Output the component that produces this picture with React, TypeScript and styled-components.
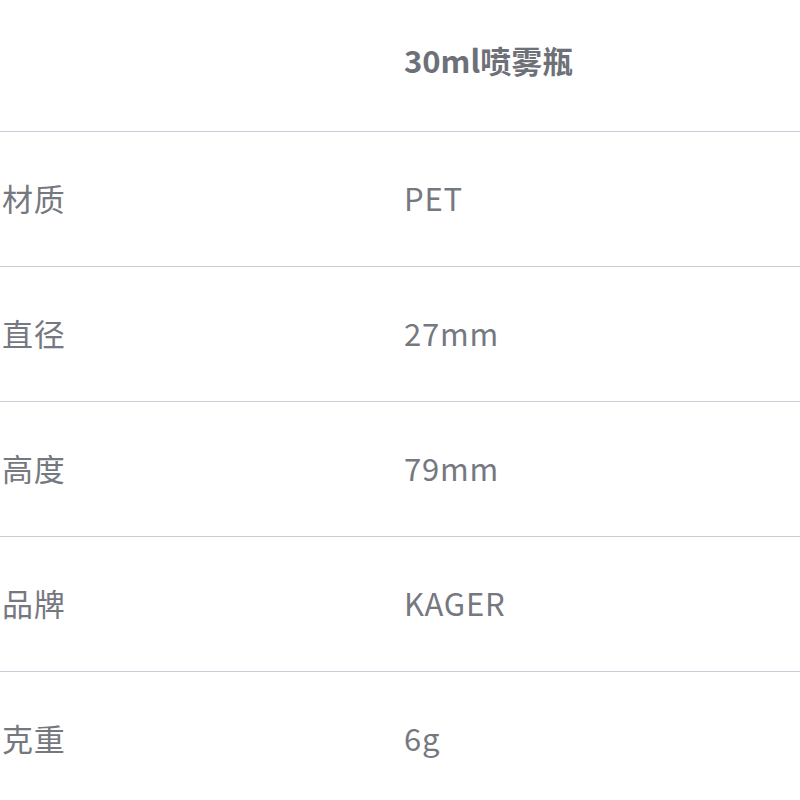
import React from "react";
import styled, { createGlobalStyle } from "styled-components";

const Global = createGlobalStyle`
  html, body { margin: 0; padding: 0; background: #ffffff; }
  body { font-family: "Noto Sans CJK SC", "Noto Sans", sans-serif; }
`;

const Table = styled.div`
  width: 800px;
  display: flex;
  flex-direction: column;
`;

const Row = styled.div<{ $head?: boolean }>`
  display: grid;
  grid-template-columns: 402px 1fr;
  align-items: center;
  box-sizing: border-box;
  height: ${(p) => (p.$head ? "132px" : "135px")};
  padding-bottom: ${(p) => (p.$head ? "11px" : "3px")};
  border-bottom: 1px solid #c9cbd8;
  &:last-child { border-bottom: none; }
`;

const Cell = styled.div<{ $head?: boolean }>`
  padding: 0 2px;
  font-size: 31px;
  line-height: 40px;
  letter-spacing: ${(p) => (p.$head ? "0" : "0.8px")};
  color: ${(p) => (p.$head ? "#6e7078" : "#76787f")};
  font-weight: ${(p) => (p.$head ? 700 : 400)};
  white-space: nowrap;
`;

const rows: [string, string][] = [
  ["材质", "PET"],
  ["直径", "27mm"],
  ["高度", "79mm"],
  ["品牌", "KAGER"],
  ["克重", "6g"],
];

export default function App() {
  return (
    <>
      <Global />
      <Table>
        <Row $head>
          <Cell $head></Cell>
          <Cell $head>30ml喷雾瓶</Cell>
        </Row>
        {rows.map(([k, v]) => (
          <Row key={k}>
            <Cell>{k}</Cell>
            <Cell>{v}</Cell>
          </Row>
        ))}
      </Table>
    </>
  );
}
